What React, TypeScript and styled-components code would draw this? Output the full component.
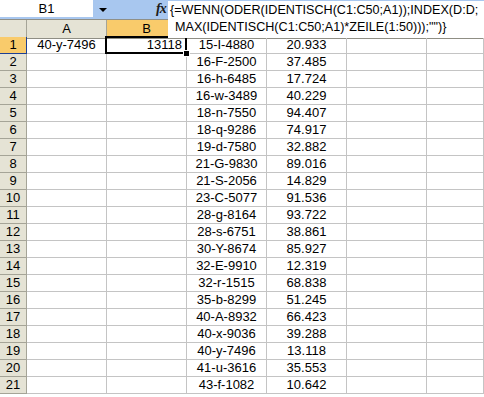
import React from "react";
import styled, { createGlobalStyle } from "styled-components";

const Global = createGlobalStyle`
  html, body { margin: 0; padding: 0; background: #ffffff; overflow: hidden; }
  body { font-family: "Liberation Sans", Arial, sans-serif; font-size: 13px; color: #000; }
`;

const Page = styled.div`
  width: 484px;
  height: 397px;
  overflow: hidden;
  position: relative;
  background: #fff;
`;

const Toolbar = styled.div`
  position: relative;
  height: 19px;
  background: #a8c7ef;
  border-bottom: 1px solid #8f8f87;
  display: flex;
  align-items: flex-start;
`;

const NameBox = styled.div`
  width: 93px;
  height: 17px;
  background: #ffffff;
  display: flex;
  align-items: center;
  justify-content: center;
  font-size: 13px;
  line-height: 17px;
`;

const DropButton = styled.div`
  width: 20px;
  height: 17px;
  display: flex;
  align-items: center;
  justify-content: center;
`;

const Arrow = styled.div`
  width: 0;
  height: 0;
  border-left: 4px solid transparent;
  border-right: 4px solid transparent;
  border-top: 4px solid #000;
  margin-top: 2px;
`;

const FxLabel = styled.div`
  margin-left: 43px;
  width: 13px;
  height: 18px;
  font-family: "Liberation Serif", "Times New Roman", serif;
  font-style: italic;
  font-weight: bold;
  font-size: 14px;
  line-height: 18px;
  letter-spacing: -1px;
  color: #1b1b1b;
`;

const FormulaBox = styled.div`
  position: absolute;
  left: 168px;
  top: 1px;
  right: 0;
  height: 37px;
  background: #ffffff;
  z-index: 5;
  padding: 1px 0 0 2px;
  box-sizing: border-box;
  font-size: 12.6px;
  line-height: 17px;
  white-space: nowrap;
  overflow: hidden;
`;

const FormulaLine = styled.div<{ $indent?: number }>`
  padding-left: ${(p) => p.$indent ?? 0}px;
`;

const Sheet = styled.div`
  display: grid;
  grid-template-columns: 27px repeat(5, 80px) 1fr;
  grid-auto-rows: 17px;
`;

const Cell = styled.div<{ $align?: "left" | "center" | "right" }>`
  box-sizing: border-box;
  border-right: 1px solid #c4c4c4;
  border-bottom: 1px solid #c4c4c4;
  line-height: 16px;
  font-size: 13px;
  text-align: ${(p) => p.$align ?? "center"};
  padding: 0 2px;
  white-space: nowrap;
  overflow: hidden;
`;

const HeadCell = styled.div<{ $selected?: boolean }>`
  box-sizing: border-box;
  height: 19px;
  background: ${(p) => (p.$selected ? "#f9cb6b" : "#e5e3d5")};
  border-right: 1px solid #a5a497;
  border-bottom: 1px solid #8f8e84;
  text-align: center;
  line-height: 18px;
  font-size: 13px;
`;

const RowHead = styled.div<{ $selected?: boolean }>`
  box-sizing: border-box;
  background: ${(p) => (p.$selected ? "#f9cb6b" : "#e5e3d5")};
  border-right: 1px solid ${(p) => (p.$selected ? "#1c3f94" : "#a5a497")};
  border-bottom: 1px solid ${(p) => (p.$selected ? "#1c3f94" : "#a5a497")};
  text-align: center;
  line-height: 16px;
  font-size: 13px;
`;

const ActiveCell = styled(Cell)`
  position: relative;
  overflow: visible;
  padding-right: 4px;
  &::after {
    content: "";
    position: absolute;
    left: -2px;
    top: -1px;
    right: -1px;
    bottom: -1px;
    border: 2px solid #000;
    pointer-events: none;
  }
`;

const FillHandle = styled.span`
  position: absolute;
  right: -4px;
  bottom: -4px;
  width: 5px;
  height: 5px;
  background: #000;
  border: 1px solid #fff;
  z-index: 2;
`;

const data: [string, string][] = [
  ["15-I-4880", "20.933"],
  ["16-F-2500", "37.485"],
  ["16-h-6485", "17.724"],
  ["16-w-3489", "40.229"],
  ["18-n-7550", "94.407"],
  ["18-q-9286", "74.917"],
  ["19-d-7580", "32.882"],
  ["21-G-9830", "89.016"],
  ["21-S-2056", "14.829"],
  ["23-C-5077", "91.536"],
  ["28-g-8164", "93.722"],
  ["28-s-6751", "38.861"],
  ["30-Y-8674", "85.927"],
  ["32-E-9910", "12.319"],
  ["32-r-1515", "68.838"],
  ["35-b-8299", "51.245"],
  ["40-A-8932", "66.423"],
  ["40-x-9036", "39.288"],
  ["40-y-7496", "13.118"],
  ["41-u-3616", "35.553"],
  ["43-f-1082", "10.642"],
];

// Column headers C–F sit underneath the expanded formula box, so only A and B show a label.
const columns = [
  { key: "A", label: "A" },
  { key: "B", label: "B" },
  { key: "C", label: "" },
  { key: "D", label: "" },
  { key: "E", label: "" },
  { key: "F", label: "" },
];

export default function App() {
  return (
    <Page>
      <Global />
      <Toolbar>
        <NameBox>B1</NameBox>
        <DropButton>
          <Arrow />
        </DropButton>
        <FxLabel>fx</FxLabel>
        <FormulaBox>
          <FormulaLine>{"{=WENN(ODER(IDENTISCH(C1:C50;A1));INDEX(D:D;"}</FormulaLine>
          <FormulaLine $indent={5}>{'MAX(IDENTISCH(C1:C50;A1)*ZEILE(1:50)));"")}'}</FormulaLine>
        </FormulaBox>
      </Toolbar>
      <Sheet>
        <HeadCell />
        {columns.map((c) => (
          <HeadCell key={c.key} $selected={c.key === "B"}>
            {c.label}
          </HeadCell>
        ))}
        {data.map(([c, d], i) => {
          const row = i + 1;
          return (
            <React.Fragment key={row}>
              <RowHead $selected={row === 1}>{row}</RowHead>
              <Cell>{row === 1 ? "40-y-7496" : ""}</Cell>
              {row === 1 ? (
                <ActiveCell $align="right">
                  13118
                  <FillHandle />
                </ActiveCell>
              ) : (
                <Cell />
              )}
              <Cell>{c}</Cell>
              <Cell>{d}</Cell>
              <Cell />
              <Cell />
            </React.Fragment>
          );
        })}
      </Sheet>
    </Page>
  );
}
